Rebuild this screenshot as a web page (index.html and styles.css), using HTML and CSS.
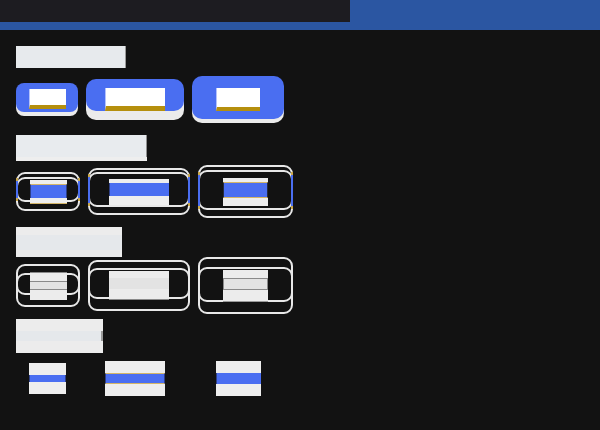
FILE: index.html
```html
<!DOCTYPE html>
<html lang="en">
<head>
    <meta charset="UTF-8">
    <meta name="viewport" content="width=device-width, initial-scale=1.0">
    <title>Buttons</title>
    <link rel="stylesheet" href="styles.css">
</head>
<body>
    <div class="topbar">
        <div class="topbar-left"></div>
        <div class="topbar-right"></div>
    </div>
    <div class="strip"></div>

    <div class="page">
        <div class="heading h1"></div>
        <div class="row row1">
            <div class="btn solid sm"><div class="label"></div></div>
            <div class="btn solid md"><div class="label"></div></div>
            <div class="btn solid lg"><div class="label"></div></div>
        </div>

        <div class="heading h2"></div>
        <div class="row row2">
            <div class="btn ring sm"><div class="fill"><div class="band"></div></div><span class="bars"></span></div>
            <div class="btn ring md"><div class="fill"><div class="band"></div></div><span class="bars"></span></div>
            <div class="btn ring lg"><div class="fill"><div class="band"></div></div><span class="bars"></span></div>
        </div>

        <div class="heading h3"><div class="heading-band"></div></div>
        <div class="row row3">
            <div class="btn ring sm"><div class="fill"><div class="band"></div></div></div>
            <div class="btn ring md"><div class="fill"><div class="band"></div></div></div>
            <div class="btn ring lg"><div class="fill"><div class="band"></div></div></div>
        </div>

        <div class="heading h4"><div class="heading-band"></div></div>
        <div class="row row4">
            <div class="btn ghost sm"><div class="fill"><div class="band"></div></div></div>
            <div class="btn ghost md"><div class="fill"><div class="band"></div></div></div>
            <div class="btn ghost lg"><div class="fill"><div class="band"></div></div></div>
        </div>
    </div>
</body>
</html>
```

FILE: styles.css
```css
html, body{
    margin: 0;
    width: 100%;
    height: 100%;
    background-color: #121212;
}

.topbar{
    display: flex;
    height: 22px;
}
.topbar-left{
    width: 350px;
    background-color: #1d1c21;
}
.topbar-right{
    flex: 1;
    background-color: #2b56a2;
}
.strip{
    height: 8px;
    background-color: #2b56a2;
}

.page{
    padding: 0 16px;
}

/* section titles */
.heading{
    background-color: #e7eaed;
    box-sizing: border-box;
}
.h1{
    margin-top: 16px;
    width: 110px;
    height: 22px;
    border-right: 1px solid #9a9a9a;
}
.h2{
    margin-top: 12px;
    width: 131px;
    height: 26px;
    background-color: #e8ebee;
    border-bottom: 4px solid #eeeeee;
    box-shadow: inset -1px 0 0 #8f8f8f;
}
.h3{
    margin-top: 9px;
    width: 106px;
    height: 30px;
    background-color: #ececec;
    padding-top: 8px;
}
.h4{
    margin-top: 5px;
    width: 87px;
    height: 34px;
    background-color: #ececec;
    padding-top: 12px;
}
.heading-band{
    height: 15px;
    background-color: #e5e8eb;
}
.h4 .heading-band{
    height: 10px;
    border-right: 2px solid #9a9a9a;
}

.row{
    display: flex;
    align-items: center;
    gap: 8px;
}
.row1{ margin-top: 8px; height: 47px; }
.row2{ margin-top: 4px; height: 53px; }
.row3{ height: 57px; }
.row4{ margin-top: 8px; height: 35px; }

.btn{
    position: relative;
    box-sizing: border-box;
    display: flex;
    justify-content: center;
}

/* solid buttons */
.solid{
    background-color: #4a6ef1;
    border-radius: 8px;
    align-items: flex-start;
}
.solid .label{
    background-color: #ffffff;
    border-left: 1px solid #b3c1fb;
    border-bottom: 4px solid #b58f0d;
    box-sizing: border-box;
}
.solid.sm{ width: 62px; height: 29px; padding-top: 6px; margin-bottom: 4px; box-shadow: 0 4px 0 #ebebeb; }
.solid.md{ width: 98px; height: 32px; padding-top: 9px; margin-bottom: 9px; box-shadow: 0 9px 0 #ebebeb; border-radius: 10px; }
.solid.lg{ width: 92px; height: 43px; padding-top: 12px; margin-bottom: 4px; box-shadow: 0 4px 0 #ebebeb; border-radius: 10px; }
.solid.sm .label{ width: 37px; height: 20px; }
.solid.md .label{ width: 60px; height: 23px; border-bottom-width: 5px; }
.solid.lg .label{ width: 44px; height: 23px; }

/* outlined buttons: two overlapping rings */
.ring{
    align-items: center;
}
.ring::before, .ring::after{
    content: "";
    position: absolute;
    left: 0;
    right: 0;
    border: 2px solid #e8e8e8;
    border-radius: 9px;
}
.ring::before{ top: var(--a-top); bottom: var(--a-bot); }
.ring::after{ top: var(--b-top); bottom: var(--b-bot); }

.bars{
    position: absolute;
    inset: 0;
    z-index: 2;
    background:
        linear-gradient(#c9a84c 0 3px, #4a6ef1 3px calc(100% - 3px), #c9a84c 0) left var(--bar-top) / 2px var(--bar-h) no-repeat,
        linear-gradient(#c9a84c 0 3px, #4a6ef1 3px calc(100% - 3px), #c9a84c 0) right var(--bar-top) / 2px var(--bar-h) no-repeat;
}

.row2 .sm{ width: 64px; height: 39px; --a-top: 0px; --a-bot: 9px; --b-top: 5px; --b-bot: 0px; --bar-top: 6px; --bar-h: 23px; }
.row2 .md{ width: 102px; height: 47px; --a-top: 0px; --a-bot: 8px; --b-top: 4px; --b-bot: 0px; --bar-top: 6px; --bar-h: 32px; }
.row2 .lg{ width: 95px; height: 53px; --a-top: 0px; --a-bot: 8px; --b-top: 5px; --b-bot: 0px; --bar-top: 7px; --bar-h: 37px; }

.row3 .sm{ width: 64px; height: 43px; --a-top: 0px; --a-bot: 0px; --b-top: 9px; --b-bot: 12px; }
.row3 .md{ width: 102px; height: 51px; --a-top: 0px; --a-bot: 0px; --b-top: 8px; --b-bot: 12px; }
.row3 .lg{ width: 95px; height: 57px; --a-top: 0px; --a-bot: 0px; --b-top: 10px; --b-bot: 12px; }

/* inner fills */
.fill{
    position: relative;
    z-index: 1;
    box-sizing: border-box;
    background-color: #eeeeee;
}
.band{
    box-sizing: border-box;
    background-color: #4a6ef1;
}

.row2 .sm .fill{ width: 37px; height: 24px; padding-top: 4px; border-bottom: 1px solid #d4b568; }
.row2 .sm .band{ height: 14px; border-top: 1px solid #d4b568; border-left: 1px solid #2d3f86; border-right: 1px solid #2d3f86; }
.row2 .md .fill{ width: 60px; height: 26px; padding-top: 4px; }
.row2 .md .band{ height: 13px; border-left: 1px solid #2d3f86; }
.row2 .lg .fill{ width: 45px; height: 28px; padding-top: 4px; }
.row2 .lg .band{ height: 16px; border-top: 1px solid #d4b568; border-bottom: 1px solid #d4b568; border-left: 1px solid #232a40; border-right: 1px solid #232a40; }

.row3 .fill{ background-color: #ececec; }
.row3 .band{ background-color: #e3e3e3; border-top: 1px solid #8a8a8a; border-bottom: 1px solid #8a8a8a; }
.row3 .sm .fill{ width: 37px; height: 28px; padding-top: 8px; border-top: 1px solid #8a8a8a; }
.row3 .sm .band{ height: 9px; }
.row3 .md .fill{ width: 60px; height: 29px; padding-top: 7px; border-bottom: 1px solid #8a8a8a; }
.row3 .md .band{ height: 11px; border: none; }
.row3 .lg .fill{ width: 45px; height: 32px; padding-top: 8px; border-bottom: 1px solid #9a9a9a; }
.row3 .lg .band{ height: 12px; border-left: 1px solid #8a8a8a; border-right: 1px solid #8a8a8a; }

/* ghost buttons */
.ghost{
    align-items: center;
}
.ghost.sm{ width: 62px; }
.ghost.md{ width: 98px; }
.ghost.lg{ width: 92px; }
.ghost .fill{ padding-top: 12px; }
.ghost.sm .fill{ width: 37px; height: 31px; }
.ghost.sm .band{ height: 7px; border-left: 1px solid #2d3f86; border-right: 1px solid #2d3f86; }
.ghost.md .fill{ width: 60px; height: 35px; }
.ghost.md .band{ height: 11px; border-top: 1px solid #d4b568; border-bottom: 1px solid #d4b568; border-left: 1px solid #2d3f86; border-right: 1px solid #2d3f86; }
.ghost.lg .fill{ width: 45px; height: 35px; }
.ghost.lg .band{ height: 11px; border-left: 1px solid #2d3f86; }
```
